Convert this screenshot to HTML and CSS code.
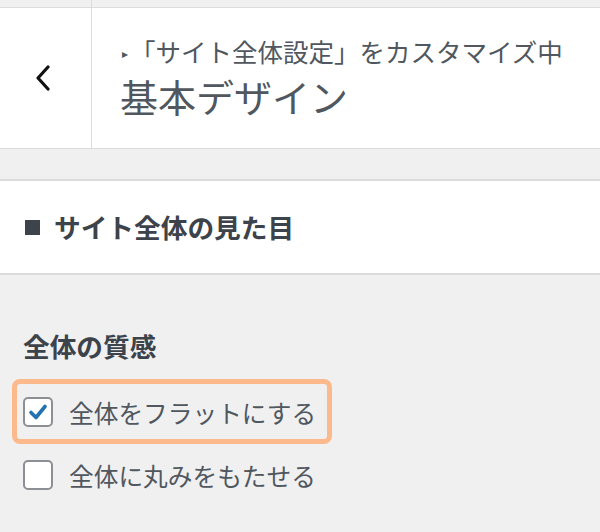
FILE: index.html
```html
<!DOCTYPE html>
<html lang="ja">
<head>
<meta charset="utf-8">
<link rel="stylesheet" href="styles.css">
</head>
<body>
<header class="header">
  <div class="back">
    <svg class="back-icon" width="16" height="26" viewBox="0 0 16 26"><path d="M13 2 L3 13 L13 24" fill="none" stroke="#111" stroke-width="3.2" stroke-linecap="round" stroke-linejoin="round"/></svg>
  </div>
  <div class="titles">
    <div class="subtitle"><span class="tri">▸</span>「サイト全体設定」をカスタマイズ中</div>
    <div class="title">基本デザイン</div>
  </div>
</header>
<section class="panel">
  <h2 class="panel-title"><span class="square"></span>サイト全体の見た目</h2>
</section>
<div class="content">
  <h3 class="group-title">全体の質感</h3>
  <div class="options">
    <label class="option highlight">
      <span class="box checked"><svg width="22" height="22" viewBox="0 0 22 22"><path d="M4 11.5 L9 16.5 L18 5.5" fill="none" stroke="#2271b1" stroke-width="3.6" stroke-linecap="round" stroke-linejoin="round"/></svg></span>
      <span class="label">全体をフラットにする</span>
    </label>
    <label class="option">
      <span class="box"></span>
      <span class="label">全体に丸みをもたせる</span>
    </label>
  </div>
</div>
</body>
</html>
```
FILE: styles.css
```css
* { box-sizing: border-box; }
html, body { margin: 0; padding: 0; }
body {
  width: 600px;
  height: 532px;
  overflow: hidden;
  background: #f0f0f1;
  font-family: "Noto Sans CJK JP", "Noto Sans", sans-serif;
  color: #50575e;
}
.header {
  display: flex;
  height: 149px;
  border-bottom: 1px solid #dcdcde;
  background: linear-gradient(#f0f0f1 0, #f0f0f1 7px, #dcdcde 7px, #dcdcde 8px, #fff 8px);
}
.back {
  width: 92px;
  border-right: 1px solid #dcdcde;
  display: flex;
  align-items: center;
  justify-content: center;
  padding-top: 8px;
}
.back-icon { margin-right: 6px; }
.titles {
  padding-left: 28px;
  padding-top: 35px;
}
.subtitle {
  font-size: 25.5px;
  line-height: 32px;
  color: #50575e;
  white-space: nowrap;
}
.tri {
  font-size: 12px;
  display: inline-block;
  vertical-align: 4px;
  margin-right: 2px;
  margin-left: 2px;
}
.title {
  font-size: 38px;
  line-height: 44px;
  margin-top: 5px;
  color: #50575e;
  white-space: nowrap;
}
.panel {
  margin-top: 30px;
  background: #fff;
  border-top: 2px solid #dcdcde;
  border-bottom: 2px solid #dcdcde;
  height: 96px;
  display: flex;
  align-items: center;
  padding-left: 25px;
}
.panel-title {
  margin: 0;
  font-size: 26.7px;
  line-height: 34px;
  font-weight: 700;
  color: #3c434a;
  display: flex;
  align-items: center;
  white-space: nowrap;
}
.square {
  width: 15px;
  height: 15px;
  background: #3c434a;
  margin-right: 14px;
}
.content {
  padding: 55px 0 0 12px;
}
.group-title {
  margin: 0 0 0 11px;
  font-size: 26.7px;
  line-height: 32px;
  font-weight: 700;
  color: #3c434a;
}
.options {
  margin-top: 17px;
  display: flex;
  flex-direction: column;
  gap: 11px;
}
.option {
  display: flex;
  align-items: center;
  gap: 16px;
  height: 40px;
  padding-left: 11px;
}
.option.highlight {
  width: 320px;
  height: 65px;
  border: 5px solid #fcb98b;
  border-radius: 8px;
  padding-left: 6px;
}
.box {
  width: 30px;
  height: 30px;
  border: 2px solid #8c8f94;
  border-radius: 5px;
  background: #fff;
  display: flex;
  align-items: center;
  justify-content: center;
  flex: none;
}
.label {
  font-size: 24.7px;
  line-height: 32px;
  color: #50575e;
  white-space: nowrap;
}
```
